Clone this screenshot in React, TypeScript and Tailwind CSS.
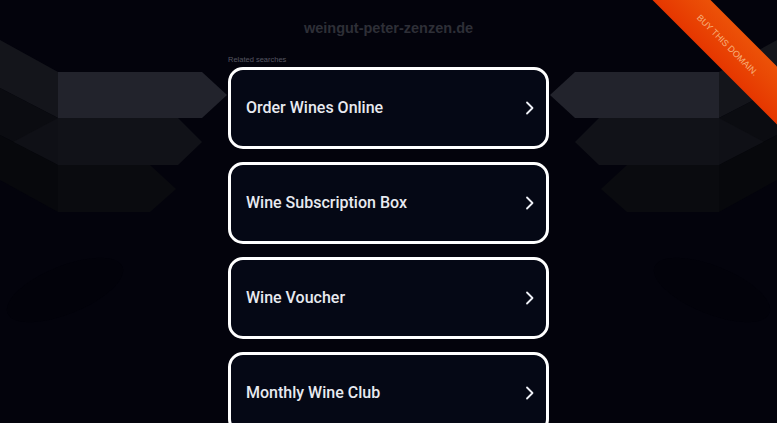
import React from "react";

const items = ["Order Wines Online", "Wine Subscription Box", "Wine Voucher", "Monthly Wine Club"];

function Side() {
  return (
    <>
      <polygon points="0,40 58,72 58,118 0,88" fill="#14151b" />
      <polygon points="0,88 58,118 58,165 0,135" fill="#0b0c11" />
      <polygon points="13,142 58,118 58,165" fill="#0f1016" />
      <polygon points="0,135 58,165 58,212 0,180" fill="#07080c" />
      <polygon points="58,72 202,72 227,95 202,118 58,118" fill="#22232c" />
      <polygon points="58,118 178,118 202,142 178,165 58,165" fill="#111218" />
      <polygon points="58,165 150,165 176,189 150,212 58,212" fill="#0a0b0f" />
    </>
  );
}

function Decor() {
  return (
    <svg className="absolute inset-0 pointer-events-none" width="777" height="423" viewBox="0 0 777 423">
      <ellipse cx="65" cy="290" rx="62" ry="24" transform="rotate(-22 65 290)" fill="#02020a" />
      <ellipse cx="712" cy="290" rx="62" ry="24" transform="rotate(22 712 290)" fill="#02020a" />
      <Side />
      <g transform="translate(777 0) scale(-1 1)">
        <Side />
      </g>
    </svg>
  );
}

function Chevron() {
  return (
    <svg width="9" height="14" viewBox="0 0 9 14" fill="none">
      <path d="M2 1.5 L7.5 7 L2 12.5" stroke="#eef0f6" strokeWidth="1.8" strokeLinecap="round" strokeLinejoin="round" />
    </svg>
  );
}

export default function App() {
  return (
    <div className="relative w-[777px] h-[423px] overflow-hidden bg-[#03030c]">
      <Decor />
      <div className="absolute left-[602px] top-[25px] w-[250px] h-[41px] rotate-45 bg-gradient-to-b from-[#ec5208] to-[#e63600] flex items-center justify-center">
        <span className="text-[9px] leading-none text-[#f7b27c]" style={{ fontFamily: '"Liberation Sans", Arial, sans-serif' }}>
          BUY THIS DOMAIN.
        </span>
      </div>
      <div className="relative flex flex-col items-center" style={{ fontFamily: '"Liberation Sans", Arial, sans-serif' }}>
        <div className="pt-[19px] h-[52px] text-[14.5px] leading-[18px] font-bold text-[#2e2f37]">weingut-peter-zenzen.de</div>
        <div className="w-[321px] text-[7.5px] leading-[15px] text-[#555661]">Related searches</div>
        <div className="flex flex-col gap-[13px] w-[321px]">
          {items.map((t) => (
            <div
              key={t}
              className="h-[82px] rounded-[15px] border-[3px] border-white bg-[#050815] flex items-center justify-between pl-[15px] pr-[12px]"
            >
              <span
                className="text-[16px] font-medium text-[#e8eaf0]"
                style={{ fontFamily: 'Roboto, "Liberation Sans", sans-serif' }}
              >
                {t}
              </span>
              <Chevron />
            </div>
          ))}
        </div>
      </div>
    </div>
  );
}
